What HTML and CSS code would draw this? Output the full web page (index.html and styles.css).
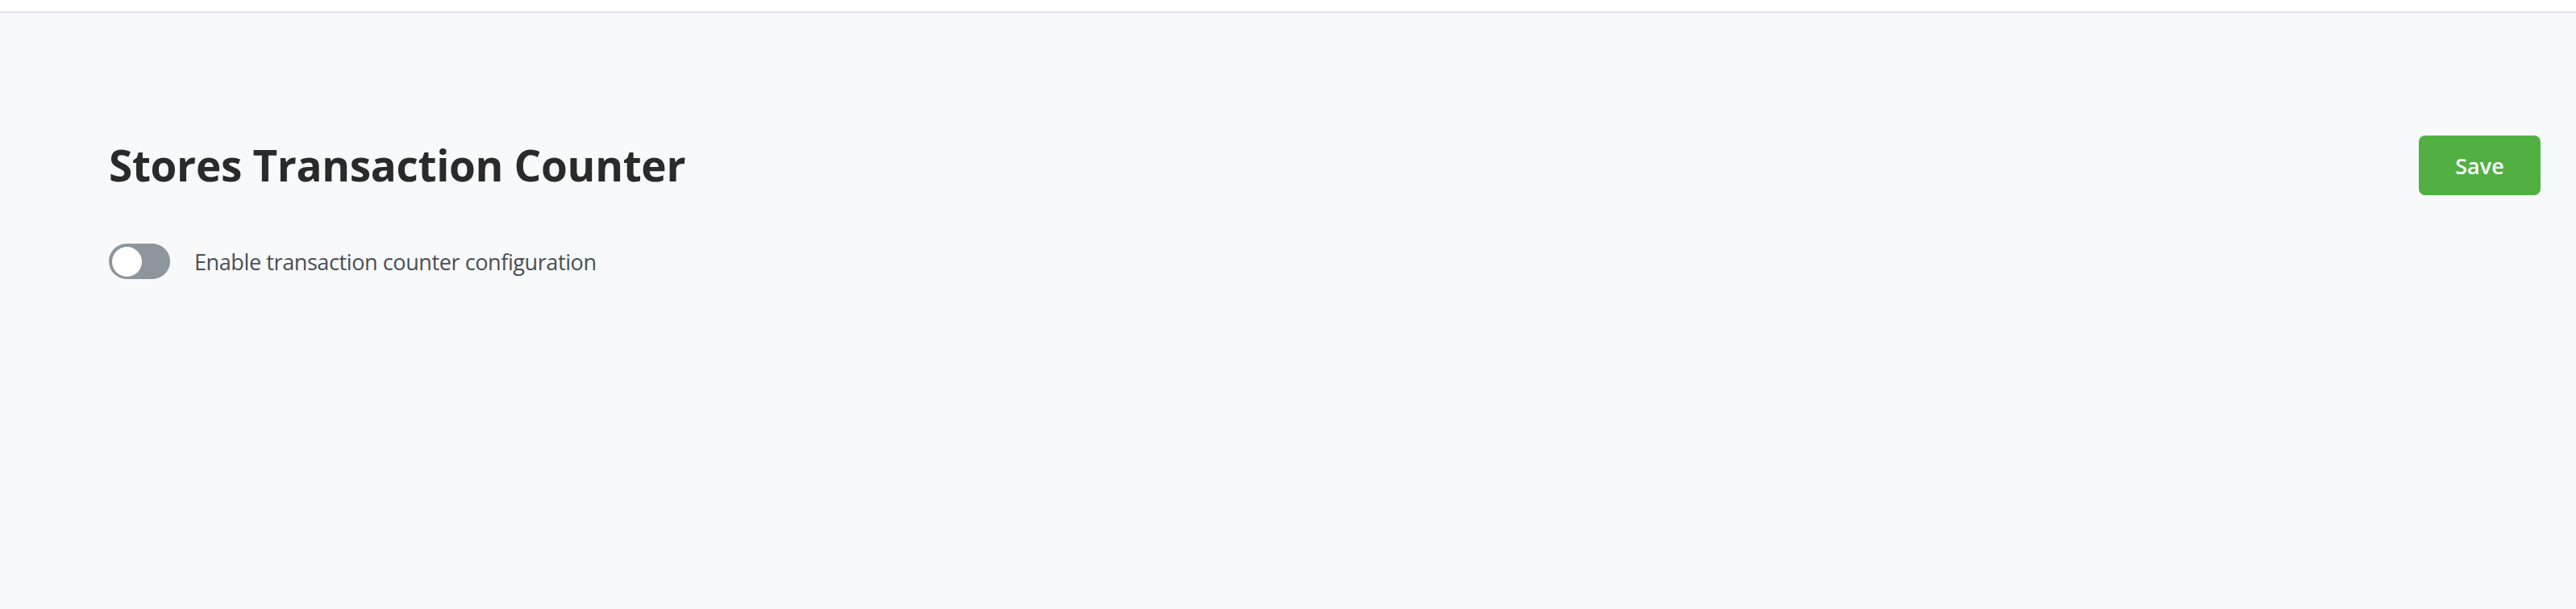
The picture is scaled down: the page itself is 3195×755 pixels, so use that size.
FILE: index.html
```html
<!DOCTYPE html>
<html lang="en">
<head>
<meta charset="utf-8">
<title>Stores Transaction Counter</title>
<link rel="stylesheet" href="styles.css">
</head>
<body>
  <div class="topbar"></div>
  <main class="page">
    <div class="header-row">
      <h1 class="title">Stores Transaction Counter</h1>
      <button class="btn-save" type="button">Save</button>
    </div>
    <label class="switch-row">
      <span class="switch"><span class="knob"></span></span>
      <span class="switch-label">Enable transaction counter configuration</span>
    </label>
  </main>
</body>
</html>
```

FILE: styles.css
```css
* { box-sizing: border-box; }
html, body {
  margin: 0;
  padding: 0;
  height: 100%;
}
body {
  background: #f8f9fa;
  font-family: "Open Sans", "Noto Sans", sans-serif;
  color: #2b2b2b;
}
.topbar {
  height: 16px;
  background: #ffffff;
  border-bottom: 2px solid #dfdfe5;
}
.page {
  padding: 152px 44px 0 135px;
}
.header-row {
  display: flex;
  align-items: center;
  justify-content: space-between;
}
.title {
  margin: 0;
  font-size: 53px;
  font-weight: 700;
  line-height: 74px;
  color: #2a2a2a;
  letter-spacing: -0.3px;
}
.btn-save {
  width: 151px;
  height: 74px;
  border: none;
  border-radius: 8px;
  background: #52b043;
  color: #ffffff;
  font-family: "Open Sans", "Noto Sans", sans-serif;
  font-size: 27px;
  font-weight: 600;
  cursor: pointer;
}
.switch-row {
  display: flex;
  align-items: center;
  gap: 30px;
  margin-top: 60px;
}
.switch {
  width: 76px;
  height: 44px;
  border-radius: 22px;
  background: #8e959c;
  display: flex;
  align-items: center;
  padding: 4px;
}
.knob {
  width: 37px;
  height: 37px;
  border-radius: 50%;
  background: #ffffff;
}
.switch-label {
  font-size: 27px;
  color: #484f56;
  letter-spacing: -0.4px;
}
```
